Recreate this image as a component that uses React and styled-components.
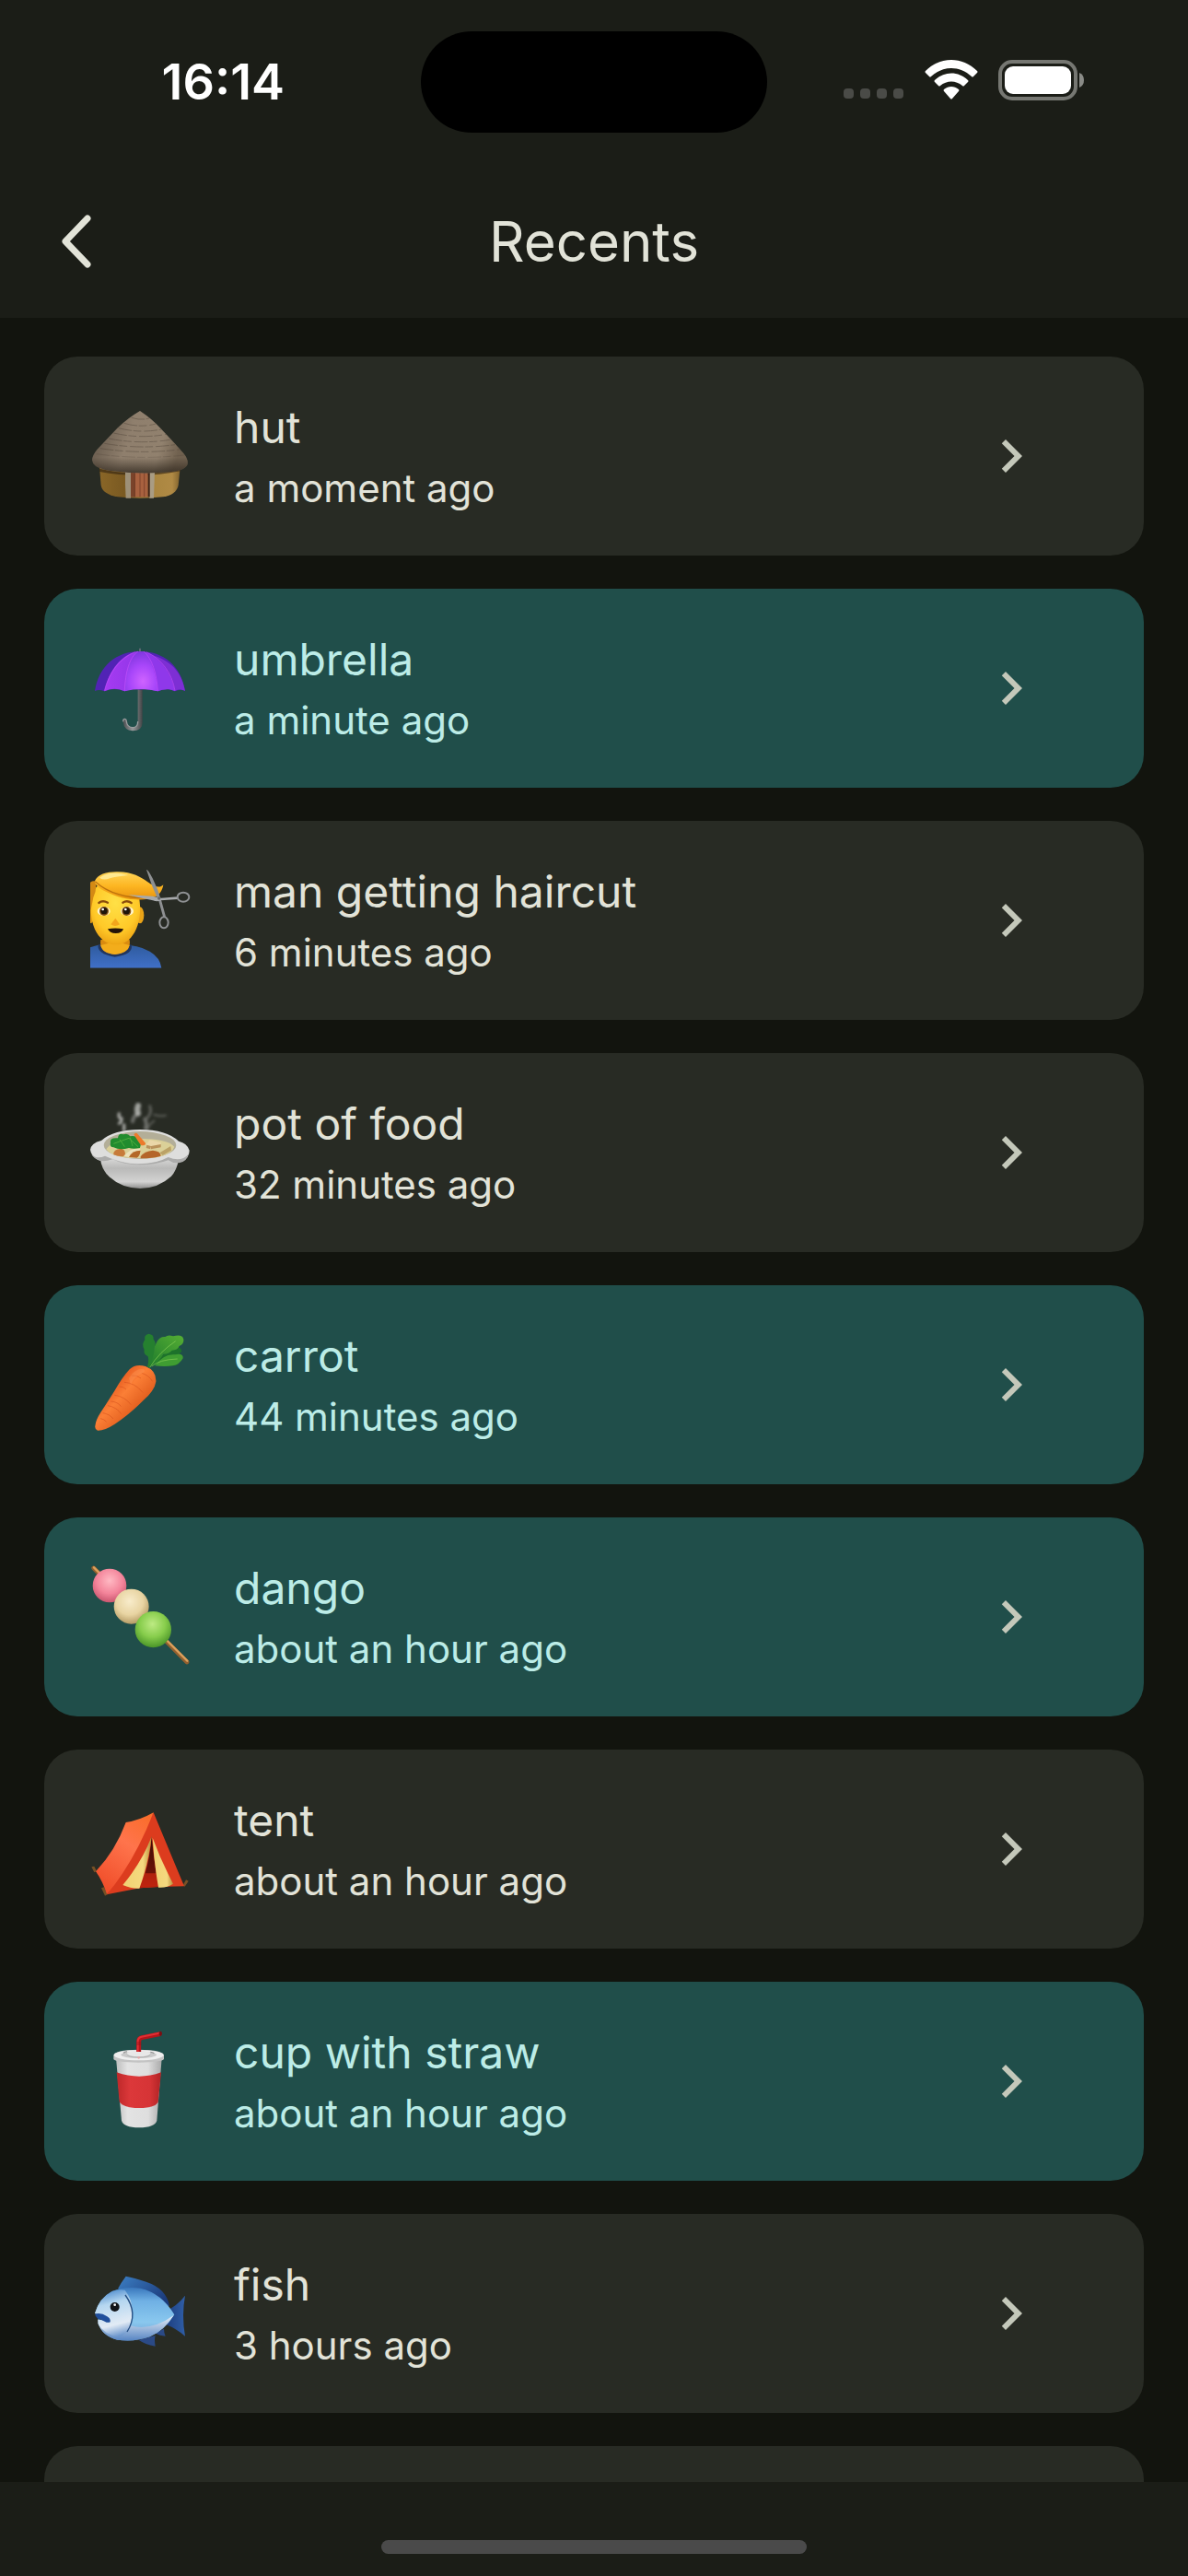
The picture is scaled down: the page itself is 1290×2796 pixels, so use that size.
import styled, { createGlobalStyle } from "styled-components";
import { MdChevronRight } from "react-icons/md";

const GlobalStyle = createGlobalStyle`
  *,
  *::before,
  *::after {
    box-sizing: border-box;
  }
  body {
    margin: 0;
    background: #12140e;
    color: #e2e3d8;
    font-family: Inter, "Liberation Sans", sans-serif;
  }
`;

const Screen = styled.div`
  display: flex;
  flex-direction: column;
  height: 100vh;
`;

const Header = styled.header`
  flex: none;
  background: #1b1d17;
`;

const StatusBar = styled.div`
  display: grid;
  grid-template-columns: 1fr 376px 1fr;
  align-items: center;
  height: 178px;
`;

const Clock = styled.time`
  padding-right: 148px;
  color: #fff;
  font-size: 54px;
  font-weight: 600;
  line-height: 64px;
  text-align: right;
`;

const Island = styled.div`
  height: 110px;
  border-radius: 55px;
  background: #000;
`;

const StatusIcons = styled.div`
  display: flex;
  align-items: center;
  gap: 22px;
  padding: 0 0 4px 83px;
  svg {
    display: block;
  }
`;

const Toolbar = styled.div`
  display: grid;
  grid-template-columns: 1fr auto 1fr;
  align-items: center;
  height: 167px;
  padding: 0 48px;
`;

const BackButton = styled.button`
  justify-self: start;
  display: flex;
  align-items: center;
  justify-content: center;
  width: 72px;
  height: 72px;
  padding: 0;
  border: 0;
  background: none;
  color: inherit;
`;

const Title = styled.h1`
  margin: 0;
  font-size: 60px;
  font-weight: 400;
  line-height: 80px;
`;

const List = styled.ul`
  flex: 1;
  min-height: 0;
  display: flex;
  flex-direction: column;
  gap: 36px;
  margin: 0;
  padding: 42px 48px 0;
  overflow-y: auto;
  scrollbar-width: none;
  list-style: none;
`;

const Item = styled.li`
  flex: none;
  display: flex;
  min-height: 216px;
  border-radius: 36px;
  background: ${({ $active }) => ($active ? "#204e4a" : "#282b24")};
  color: ${({ $active }) => ($active ? "#bcece7" : "#e2e3d8")};
`;

const RowButton = styled.button`
  flex: 1;
  display: flex;
  align-items: center;
  gap: 46px;
  padding: 0 108px 0 48px;
  border: 0;
  background: none;
  color: inherit;
  font-family: inherit;
  text-align: left;
`;

const Picture = styled.svg`
  flex: none;
  width: 112px;
  height: 112px;
`;

const Texts = styled.span`
  flex: 1;
  display: flex;
  flex-direction: column;
  gap: 4px;
  padding-top: 2px;
`;

const Name = styled.span`
  font-size: 48px;
  line-height: 64px;
`;

const When = styled.span`
  font-size: 42px;
  line-height: 60px;
`;

const Chevron = styled(MdChevronRight)`
  flex: none;
  width: 72px;
  height: 72px;
  color: #c4c8ba;
`;

const Footer = styled.footer`
  flex: none;
  display: flex;
  align-items: flex-end;
  justify-content: center;
  height: 102px;
  padding-bottom: 24px;
  background: #1b1d17;
`;

const HomeIndicator = styled.div`
  width: 462px;
  height: 15px;
  border-radius: 8px;
  background: #4a4a4a;
`;

const Signal = () => (
  <svg width="66" height="44" viewBox="0 0 66 44" fill="#4a4b47">
    <rect x="0" y="31" width="11" height="11" rx="4" />
    <rect x="18" y="31" width="11" height="11" rx="4" />
    <rect x="36" y="31" width="11" height="11" rx="4" />
    <rect x="54" y="31" width="11" height="11" rx="4" />
  </svg>
);

const Wifi = () => (
  <svg width="58" height="44" viewBox="0 0 58 44" fill="#fff">
    <path d="M1 12C17-4 41-4 57 12q1 1 0 2l-4 4q-1 1-2 0C38 6 20 6 7 18q-1 1-2 0l-4-4q-1-1 0-2z" />
    <path d="M11 22c10-10 26-10 36 0q1 1 0 2l-4 4q-1 1-2 0c-7-6-17-6-24 0q-1 1-2 0l-4-4q-1-1 0-2z" />
    <path d="M21 32c5-4 11-4 16 0q1 1 0 2l-7 8q-1 1-2 0l-7-8q-1-1 0-2z" />
  </svg>
);

const Battery = () => (
  <svg width="94" height="44" viewBox="0 0 94 44">
    <rect x="2" y="2" width="82" height="40" rx="13" fill="none" stroke="#767772" strokeWidth="4" />
    <rect x="7" y="7" width="72" height="30" rx="9" fill="#fff" />
    <path d="M88 14q5 2 5 8t-5 8z" fill="#8a8b87" />
  </svg>
);

const Hut = () => (
  <Picture viewBox="48 177 336 336" aria-hidden="true">
    <defs>
      <linearGradient id="hutRoof" x1="0" y1="0" x2="1" y2="0.2">
        <stop offset="0" stopColor="#5c5043" />
        <stop offset="0.45" stopColor="#8f7f6d" />
        <stop offset="0.8" stopColor="#91816e" />
        <stop offset="1" stopColor="#70614f" />
      </linearGradient>
      <linearGradient id="hutWall">
        <stop offset="0" stopColor="#8a6627" />
        <stop offset="0.3" stopColor="#7a5a22" />
        <stop offset="0.65" stopColor="#a9853f" />
        <stop offset="0.9" stopColor="#b08a45" />
        <stop offset="1" stopColor="#80622d" />
      </linearGradient>
      <linearGradient id="hutShade" x1="0" y1="0" x2="0" y2="1">
        <stop offset="0.75" stopColor="#2c241b" stopOpacity="0" />
        <stop offset="1" stopColor="#2c241b" stopOpacity="0.75" />
      </linearGradient>
    </defs>
    <path d="M84 380l5 60q4 28 54 38 72 8 148 0 44-8 50-38l6-60z" fill="url(#hutWall)" />
    <path d="M84 386q130 30 263-2v10q-130 26-263 2z" fill="#3b2a13" opacity="0.7" />
    <path d="M168 394h18v88h-16q-3-44-2-88z" fill="#9d9078" />
    <path d="M247 394h17l-3 88h-14z" fill="#a99c84" />
    <path d="M186 394h56v84h-56z" fill="#a8613f" />
    <path d="M242 394h6v84h-6z" fill="#3f2318" />
    <path d="M199 396v82M216 396v82M230 396v82" stroke="#6e3722" strokeWidth="2" />
    <path d="M186 394h14v84h-14z" fill="#5b2e1d" opacity="0.6" />
    <path d="M216 198q42 28 68 58 44 46 74 80 18 22 12 38-10 18-52 22-102 10-204-4-52-8-54-34 0-14 16-34 30-32 66-70 36-34 74-56z" fill="url(#hutRoof)" />
    <path d="M216 198q42 28 68 58 44 46 74 80 18 22 12 38-10 18-52 22-102 10-204-4-52-8-54-34 0-14 16-34 30-32 66-70 36-34 74-56z" fill="url(#hutShade)" />
    <g fill="none" stroke="#493e33" strokeWidth="3" opacity="0.4" strokeDasharray="44 5 26 9">
      <path d="M188 220q30 10 58 2" />
      <path d="M164 238q52 16 104 2" />
      <path d="M146 254q70 18 140 4" />
      <path d="M130 270q86 20 172 4" />
      <path d="M114 288q100 20 200 4" />
      <path d="M100 304q114 20 230 4" />
      <path d="M86 320q130 20 258 4" />
      <path d="M74 338q142 20 286 4" opacity="0.6" />
    </g>
  </Picture>
);

const Umbrella = () => (
  <Picture viewBox="48 168 336 336" aria-hidden="true">
    <defs>
      <radialGradient id="umbMid" cx="0.55" cy="0.75" r="0.8">
        <stop offset="0" stopColor="#cf63ff" />
        <stop offset="0.5" stopColor="#a846fa" />
        <stop offset="1" stopColor="#7a35da" />
      </radialGradient>
      <linearGradient id="umbLeft">
        <stop offset="0" stopColor="#a63bf2" />
        <stop offset="1" stopColor="#7b30dc" />
      </linearGradient>
      <linearGradient id="umbPole">
        <stop offset="0" stopColor="#4c4e50" />
        <stop offset="0.5" stopColor="#95989a" />
        <stop offset="1" stopColor="#424446" />
      </linearGradient>
    </defs>
    <path d="M214 206h4v14h-4z" fill="#7d7489" />
    <path d="M209 330h15v118q0 27-32 27-28-1-31-30 0-10 6-9 5 1 5 8 2 20 21 20 16 0 16-20z" fill="url(#umbPole)" />
    <path d="M161 445q0-10 6-9 5 1 5 8 2 20 21 20 16 0 16-20" fill="none" stroke="#9a9d9f" strokeWidth="4" />
    <path d="M69 345C82 262 140 216 216 216s134 46 147 129q-16-8-33 1-26-14-56 0-28-10-58-5-30-5-50 5-32-14-66 0-18-8-31-1z" fill="#5123b5" />
    <path d="M100 346C116 274 156 228 206 216h20c54 12 92 60 104 130-18-10-38-7-56 0-50-11-82-11-108 0-24-10-42-10-66 0z" fill="url(#umbLeft)" />
    <path d="M166 346c0-60 16-110 44-130h16c30 26 46 76 48 130q-56-14-108 0z" fill="url(#umbMid)" />
    <path d="M274 346c-4-50-20-104-44-128 48 20 88 62 100 126-18-8-38-6-56 2z" fill="#8f38ea" />
    <path d="M330 344c-12-54-38-92-76-116 60 16 98 54 109 117-12-6-20-6-33-1z" fill="#7d2fd4" />
    <g fill="none" stroke="#d054ff" strokeWidth="2" opacity="0.8">
      <path d="M166 344c2-60 16-110 44-128" />
      <path d="M274 344c-4-56-18-104-46-128" />
      <path d="M100 344c16-60 50-106 100-126" />
      <path d="M330 344c-10-58-44-104-94-126" />
    </g>
  </Picture>
);

const Haircut = () => (
  <Picture viewBox="48 69 336 336" aria-hidden="true">
    <defs>
      <radialGradient id="manFace" cx="0.5" cy="0.35" r="0.7">
        <stop offset="0" stopColor="#ffe046" />
        <stop offset="0.65" stopColor="#ffc928" />
        <stop offset="1" stopColor="#e99c10" />
      </radialGradient>
      <linearGradient id="manHair" x1="0" y1="0" x2="0" y2="1">
        <stop offset="0" stopColor="#ffd457" />
        <stop offset="0.5" stopColor="#fdb622" />
        <stop offset="1" stopColor="#e8920e" />
      </linearGradient>
      <linearGradient id="manShirt" x1="0" y1="0" x2="0" y2="1">
        <stop offset="0" stopColor="#2e5a9c" />
        <stop offset="1" stopColor="#4070c8" />
      </linearGradient>
      <clipPath id="manClip">
        <rect x="54" y="60" width="330" height="332" />
      </clipPath>
    </defs>
    <g clipPath="url(#manClip)">
      <path d="M40 330q50-20 90-14 76-4 118 22 34 20 38 54H40z" fill="url(#manShirt)" />
      <path d="M80 316q-6 30 54 40 62-8 54-40z" fill="#22365e" />
      <path d="M88 300q-8 40 46 48 56-6 48-48z" fill="#d98b10" />
      <path d="M88 318q4 26 46 30 42-4 48-30-20-8-46-8t-48 8z" fill="#f3ad1b" />
      <ellipse cx="216" cy="220" rx="13" ry="27" fill="#eaa317" />
      <ellipse cx="56" cy="220" rx="10" ry="26" fill="#e19a15" />
      <path d="M56 190c0-60 30-84 80-84s80 34 80 82c4 70-28 128-78 128S54 264 56 190z" fill="url(#manFace)" />
      <path d="M48 118q12-12 24-8 4 26-8 52-4 22-8 40h-8z" fill="#d48a14" />
      <path d="M68 110c10-24 42-32 76-31 50 0 74 18 96 32 26 18 40 22 52 10-3 20-14 34-24 38-22 10-46 12-66 10-46-2-78-16-102-28q-26-12-32-31z" fill="url(#manHair)" />
      <path d="M70 110q30 28 76 42 60 18 118 8" fill="none" stroke="#a96008" strokeWidth="4" opacity="0.75" />
      <path d="M84 98q34-24 94-8-40 4-60 10-20 8-34-2z" fill="#fff1a8" opacity="0.75" />
      <path d="M82 180q12-10 29-1M160 179q14-9 28 1" fill="none" stroke="#8b4d0d" strokeWidth="7" strokeLinecap="round" />
      <ellipse cx="98" cy="207" rx="21" ry="15" fill="#fff6d0" />
      <ellipse cx="174" cy="207" rx="21" ry="15" fill="#fff6d0" />
      <circle cx="99" cy="207" r="15" fill="#8a5415" />
      <circle cx="172" cy="207" r="15" fill="#8a5415" />
      <circle cx="99" cy="206" r="11" fill="#20150a" />
      <circle cx="172" cy="206" r="11" fill="#20150a" />
      <circle cx="95" cy="201" r="4" fill="#fff" />
      <circle cx="169" cy="201" r="4" fill="#fff" />
      <path d="M121 250q14 10 29 0l-14-20z" fill="#f3a51b" />
      <path d="M111 265q24-5 51 0-4 14-25 14-20 0-26-14z" fill="#241308" />
      <path d="M237 72q5-1 20 28 18 36 29 74l14 50-8 4-15-54q-24-50-40-102z" fill="#8e9092" />
      <path d="M178 154l78 4 30 6 54-4v8l-56 4q-12 6-26 0-44-8-80-18z" fill="#a7a9ab" />
      <circle cx="278" cy="165" r="5" fill="#66686a" />
      <ellipse cx="357" cy="161" rx="19" ry="15" fill="none" stroke="#8f9193" strokeWidth="6" />
      <ellipse cx="294" cy="244" rx="14" ry="18" fill="none" stroke="#8f9193" strokeWidth="6" />
    </g>
  </Picture>
);

const Pot = () => (
  <Picture viewBox="48 75 336 336" aria-hidden="true">
    <defs>
      <linearGradient id="potBowl" x1="0" y1="0" x2="0" y2="1">
        <stop offset="0" stopColor="#e4e4e3" />
        <stop offset="0.4" stopColor="#b9b9b8" />
        <stop offset="0.8" stopColor="#d3d3d2" />
        <stop offset="1" stopColor="#8d8d8c" />
      </linearGradient>
      <filter id="potSteam" x="-0.5" y="-0.5" width="2" height="2">
        <feGaussianBlur stdDeviation="5" />
      </filter>
    </defs>
    <g fill="none" stroke="#d4d5d2" strokeLinecap="round" filter="url(#potSteam)">
      <path d="M148 116q-4 14 8 16 0 14-8 16M164 152v18" strokeWidth="9" opacity="0.8" />
      <path d="M210 90q-6 14 0 26" strokeWidth="18" opacity="0.7" />
      <path d="M206 118q-12 8-14 24M232 134q8 16 2 30" strokeWidth="12" opacity="0.4" />
      <path d="M248 92q8 20-8 38" strokeWidth="9" opacity="0.3" />
      <path d="M262 120q26 6 38 2M262 140q-20 14-22 30" strokeWidth="6" opacity="0.3" />
    </g>
    <path d="M86 250q0 44 30 72 40 37 100 38 60-1 102-40 22-24 26-70z" fill="url(#potBowl)" />
    <path d="M54 234q3-22 36-30 40-36 126-36t126 38q28 6 35 30 0 24-24 34-22 8-46-6-40 15-92 15t-90-18q-26 14-46 6-22-12-25-33z" fill="#dededd" />
    <path d="M58 248q16 18 44 6 60 28 112 26 54 0 94-22 42 18 66-10-4 22-28 28-20 4-38-8-40 15-92 15t-90-18q-28 10-44 3-18-8-24-20z" fill="#acacab" />
    <ellipse cx="216" cy="219" rx="118" ry="45" fill="#b3ae98" />
    <path d="M106 232q24-34 110-34 90 0 112 26-14 38-112 38-90 0-110-30z" fill="#dbd098" />
    <path d="M130 250q-2-18 24-20 14 2 14 18l-6 8q-20 0-32-6z" fill="#c77b3a" />
    <path d="M164 254q24-28 52-24 8 18-10 30-24 0-42-6z" fill="#ece2bb" />
    <path d="M180 258q10-22 38-22-2 18-12 24z" fill="#b46827" />
    <path d="M218 256q12-18 40-20 26 2 26 18-26 8-66 8z" fill="#b4652a" />
    <path d="M236 216l12-14 36 8-2 14-32 8z" fill="#ead7a8" />
    <path d="M238 218l14 4-2 10-14-4zM252 222l32-6v10l-32 6z" fill="#b9925a" />
    <path d="M280 244l36-22 2 14-28 16z" fill="#bba267" />
    <path d="M120 210q-4-16 24-14 2-18 18-12 14-6 22 6 20-4 30 12 8 10 2 26-22 4-36 0-30 8-50-2-14 0-10-16z" fill="#218c2e" />
    <path d="M130 214l50-18 30 28M150 200l16 24M184 194l8 28" fill="none" stroke="#4dab3e" strokeWidth="3" />
    <path d="M196 184q6-8 12-2l26 30q2 8-14 8-10-12-24-36z" fill="#ec7a2b" />
  </Picture>
);

const Carrot = () => (
  <Picture viewBox="48 66 336 336" aria-hidden="true">
    <defs>
      <linearGradient id="carrotBody" x1="0.2" y1="0.3" x2="0.65" y2="0.75">
        <stop offset="0" stopColor="#e3541b" />
        <stop offset="0.45" stopColor="#fb7f36" />
        <stop offset="1" stopColor="#e05c1c" />
      </linearGradient>
      <linearGradient id="carrotLeaf" x1="0" y1="1" x2="1" y2="0">
        <stop offset="0" stopColor="#1e7b2c" />
        <stop offset="1" stopColor="#55ae34" />
      </linearGradient>
    </defs>
    <path d="M240 176q6-20 2-34-16-8-12-22-10-20 2-32-4-16 12-20 18 2 16 18 12 14 2 28 4 24-6 42l-6 22z" fill="#25802f" />
    <path d="M270 160q26-34 56-48 24-4 26 14-12 6-2 14 8 8-6 20-4 14-24 12-26 4-50-6l-18 14z" fill="#1d722b" />
    <path d="M264 172q30-40 66-36 28-6 26 12-12 22-34 24-26 4-58 0z" fill="#3f9d32" />
    <path d="M244 176q20-34 18-62 8-18 10-22 10-16 26-14 10-8 26-2 30-8 34 10 2 14-14 22-6 14-24 14-10 12-28 12-12 22-34 36z" fill="url(#carrotLeaf)" />
    <path d="M248 178q30-50 84-86M254 174q24-22 84-24" fill="none" stroke="#86cf55" strokeWidth="2" />
    <path d="M70 368q2-20 18-44 20-30 44-68 26-46 50-72 20-20 52-10 36 14 34 50-4 28-42 62-46 46-92 76-34 22-56 21-10-4-8-15z" fill="url(#carrotBody)" />
    <g fill="none" stroke="#cb491a" strokeWidth="2" opacity="0.7" strokeLinecap="round">
      <path d="M190 204q16-2 28 8M222 196q24 8 34 26" />
      <path d="M166 226q34 2 58 32M150 240q12 0 20 8" />
      <path d="M134 268q32 4 52 30M122 288q22 2 32 16" />
      <path d="M112 302q30 6 42 26M96 326q22 4 32 18M88 344q12 2 18 10" />
    </g>
    <path d="M180 212q22-34 48-28 8 8-8 14-24 10-34 36z" fill="#ff9a5b" opacity="0.35" />
  </Picture>
);

const Dango = () => (
  <Picture viewBox="48 72 336 336" aria-hidden="true">
    <defs>
      <radialGradient id="dangoPink" cx="0.5" cy="0.35" r="0.65">
        <stop offset="0" stopColor="#ffb9c3" />
        <stop offset="0.6" stopColor="#f3849a" />
        <stop offset="1" stopColor="#c9566f" />
      </radialGradient>
      <radialGradient id="dangoCream" cx="0.45" cy="0.35" r="0.65">
        <stop offset="0" stopColor="#f8eccb" />
        <stop offset="0.6" stopColor="#e8d4a2" />
        <stop offset="1" stopColor="#b59b65" />
      </radialGradient>
      <radialGradient id="dangoGreen" cx="0.48" cy="0.35" r="0.65">
        <stop offset="0" stopColor="#bdea83" />
        <stop offset="0.55" stopColor="#87cd4c" />
        <stop offset="1" stopColor="#4a9528" />
      </radialGradient>
    </defs>
    <path d="M65 81l304 306" stroke="#92602f" strokeWidth="14" strokeLinecap="round" />
    <path d="M66 79l304 304" stroke="#dca05c" strokeWidth="7" strokeLinecap="round" />
    <circle cx="117" cy="138" r="55" fill="url(#dangoPink)" />
    <circle cx="188" cy="206" r="57" fill="url(#dangoCream)" />
    <circle cx="259" cy="281" r="59" fill="url(#dangoGreen)" />
  </Picture>
);

const Tent = () => (
  <Picture viewBox="48 33 336 336" aria-hidden="true">
    <defs>
      <linearGradient id="tentSide" x1="0.8" y1="0" x2="0.3" y2="1">
        <stop offset="0" stopColor="#fa6d2c" />
        <stop offset="0.4" stopColor="#ff744c" />
        <stop offset="1" stopColor="#f04e2a" />
      </linearGradient>
      <linearGradient id="tentFlap">
        <stop offset="0" stopColor="#f0d173" />
        <stop offset="0.7" stopColor="#f5d97f" />
        <stop offset="1" stopColor="#b88d39" />
      </linearGradient>
      <linearGradient id="tentInside" x1="0" y1="0" x2="0" y2="1">
        <stop offset="0" stopColor="#3b0c06" />
        <stop offset="0.7" stopColor="#6b1107" />
        <stop offset="1" stopColor="#bd210d" />
      </linearGradient>
    </defs>
    <path d="M58 259l9-2 8 16-8 4zM90 328l9-3 11 24-8 4zM366 301l8 4-12 18-6-4z" fill="#775025" />
    <path d="M260 82l100 240-84 2-60 4-108 21z" fill="#dc3c1e" />
    <path d="M260 82q-46 26-90 32-34 92-98 160 22 30 36 74 88-102 152-266z" fill="url(#tentSide)" />
    <path d="M254 160q-8 100-40 168l62-4q-14-80-22-164z" fill="url(#tentInside)" />
    <path d="M218 280h52l6 42-62 3z" fill="#c0260f" opacity="0.8" />
    <path d="M254 160q-32 84-94 158 26 12 54 11 30-82 40-169z" fill="url(#tentFlap)" />
    <path d="M257 164q28 76 67 150-20 14-48 12-14-80-19-162z" fill="url(#tentFlap)" />
  </Picture>
);

const Cup = () => (
  <Picture viewBox="48 54 336 336" aria-hidden="true">
    <defs>
      <linearGradient id="cupWhite">
        <stop offset="0" stopColor="#bdbdbd" />
        <stop offset="0.25" stopColor="#e3e3e3" />
        <stop offset="0.7" stopColor="#dedede" />
        <stop offset="1" stopColor="#a9a9a9" />
      </linearGradient>
      <linearGradient id="cupRed">
        <stop offset="0" stopColor="#bd2829" />
        <stop offset="0.3" stopColor="#dc383a" />
        <stop offset="0.75" stopColor="#d63436" />
        <stop offset="1" stopColor="#b02325" />
      </linearGradient>
    </defs>
    <path d="M138 146l18 204q6 22 57 23 52-1 58-23l16-204z" fill="url(#cupWhite)" />
    <path d="M140 193q74 26 145 0l-10 98q-12 18-62 18-52 0-64-20z" fill="url(#cupRed)" />
    <path d="M130 138q0-18 82-19 82 1 82 19v12q-6 10-82 11-78-1-82-11z" fill="#c3c3c3" />
    <ellipse cx="212" cy="137" rx="81" ry="17" fill="#efefef" />
    <ellipse cx="212" cy="136" rx="58" ry="11" fill="#c9c9c9" />
    <ellipse cx="212" cy="132" rx="38" ry="10" fill="#e8e8e8" />
    <path d="M174 134q4 10 38 10t38-10" fill="none" stroke="#a5a5a5" strokeWidth="2" />
    <path d="M162 130q8-5 12-4M250 127q8 0 12 4" stroke="#979797" strokeWidth="4" fill="none" />
    <circle cx="212" cy="145" r="4" fill="#e3a9a9" />
    <path d="M212 126V92q0-10 10-12l60-12" fill="none" stroke="#b3161b" strokeWidth="15" />
    <path d="M209 126V92q0-12 12-15l58-12" fill="none" stroke="#e22e33" strokeWidth="6" />
    <ellipse cx="283" cy="67" rx="5" ry="8" fill="#7c0e12" />
    <path d="M205 96h15M205 102h15" stroke="#8b1015" strokeWidth="2" />
  </Picture>
);

const Fish = () => (
  <Picture viewBox="48 60 336 336" aria-hidden="true">
    <defs>
      <linearGradient id="fishBody" x1="0" y1="0" x2="0" y2="1">
        <stop offset="0" stopColor="#3a78bd" />
        <stop offset="0.25" stopColor="#6fb0e4" />
        <stop offset="0.65" stopColor="#8ac8ee" />
        <stop offset="1" stopColor="#6294cd" />
      </linearGradient>
      <linearGradient id="fishHead" x1="0.3" y1="0" x2="0.5" y2="1">
        <stop offset="0" stopColor="#4b89cc" />
        <stop offset="0.3" stopColor="#b4d6f0" />
        <stop offset="0.75" stopColor="#e2ebf5" />
        <stop offset="1" stopColor="#6c96cd" />
      </linearGradient>
      <linearGradient id="fishFin" x1="0" y1="0" x2="1" y2="0.6">
        <stop offset="0" stopColor="#3c7fc4" />
        <stop offset="1" stopColor="#1c3c7d" />
      </linearGradient>
      <linearGradient id="fishBelly" x1="0" y1="0" x2="0" y2="1">
        <stop offset="0" stopColor="#eaf1f8" />
        <stop offset="1" stopColor="#5785c3" />
      </linearGradient>
      <linearGradient id="fishTail">
        <stop offset="0" stopColor="#1d3e80" />
        <stop offset="1" stopColor="#2f5ea6" />
      </linearGradient>
    </defs>
    <path d="M144 148q10-20 26-41 26 4 66 18 66 22 76 78l-40 4z" fill="url(#fishFin)" />
    <path d="M300 220q36-16 63-50-6 32-6 64 0 36 6 68-28-24-62-38z" fill="url(#fishTail)" />
    <path d="M212 314l54-14q-4 12 0 35-36-6-54-21zM266 292l28-14q0 12 5 24-18 0-33-10z" fill="#2b4a86" />
    <path d="M69 228q14-50 56-72 40-16 92-10 70 16 111 86-32 52-80 72-50 18-106 10-48-12-62-52v-16l40 12q-10-18-51-30z" fill="url(#fishBody)" />
    <path d="M184 268q70 18 142-34-32 50-78 70-50 18-106 10-48-12-62-52l-1-14z" fill="url(#fishBelly)" />
    <path d="M69 228q14-50 56-72 20-8 42-4 44 58 8 136l-26 18q-52-10-69-44v-14l38 8q-4-18-49-28z" fill="url(#fishHead)" />
    <path d="M168 168q44 60 6 120" fill="none" stroke="#234c80" strokeWidth="4" />
    <path d="M69 230q20-6 40 8 12 6 10 18-8 4-18-2-12-8-22-8-8-8-10-16z" fill="#204e9b" />
    <circle cx="134" cy="207" r="15" fill="#121418" />
    <circle cx="134" cy="200" r="4" fill="#fff" />
  </Picture>
);

const recents = [
  { name: "hut", when: "a moment ago", Art: Hut },
  { name: "umbrella", when: "a minute ago", Art: Umbrella, active: true },
  { name: "man getting haircut", when: "6 minutes ago", Art: Haircut },
  { name: "pot of food", when: "32 minutes ago", Art: Pot },
  { name: "carrot", when: "44 minutes ago", Art: Carrot, active: true },
  { name: "dango", when: "about an hour ago", Art: Dango, active: true },
  { name: "tent", when: "about an hour ago", Art: Tent },
  { name: "cup with straw", when: "about an hour ago", Art: Cup, active: true },
  { name: "fish", when: "3 hours ago", Art: Fish },
];

const App = () => {
  return (
    <>
      <GlobalStyle />
      <Screen>
        <Header>
          <StatusBar>
            <Clock>16:14</Clock>
            <Island />
            <StatusIcons>
              <Signal />
              <Wifi />
              <Battery />
            </StatusIcons>
          </StatusBar>
          <Toolbar>
            <BackButton type="button" aria-label="Back">
              <svg width="36" height="60" viewBox="0 0 36 60" fill="none">
                <path
                  d="M29 5 5 30l24 25"
                  stroke="currentColor"
                  strokeWidth="7"
                  strokeLinecap="round"
                  strokeLinejoin="round"
                />
              </svg>
            </BackButton>
            <Title>Recents</Title>
          </Toolbar>
        </Header>
        <List>
          {recents.map(({ name, when, Art, active }) => (
            <Item key={name} $active={active}>
              <RowButton type="button">
                <Art />
                <Texts>
                  <Name>{name}</Name>
                  <When>{when}</When>
                </Texts>
                <Chevron aria-hidden="true" />
              </RowButton>
            </Item>
          ))}
          <Item aria-hidden="true" />
        </List>
        <Footer>
          <HomeIndicator />
        </Footer>
      </Screen>
    </>
  );
};

export default App;
